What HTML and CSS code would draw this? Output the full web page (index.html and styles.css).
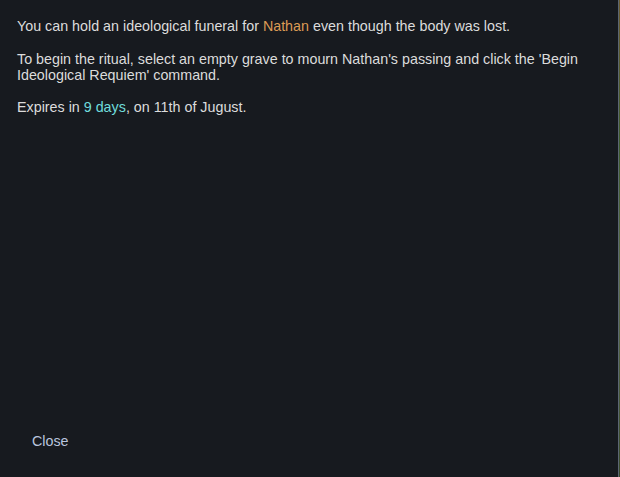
FILE: index.html
```html
<!DOCTYPE html>
<html lang="en">

<head>
    <meta charset="UTF-8">
    <title>Ideological funeral</title>
    <link rel="stylesheet" href="styles.css">
</head>

<body>
    <div class="window">
        <div class="letter">
            <p>You can hold an ideological funeral for <span class="pawn">Nathan</span> even though the body was lost.</p>
            <p>To begin the ritual, select an empty grave to mourn Nathan's passing and click the 'Begin
                Ideological Requiem' command.</p>
            <p>Expires in <span class="time">9 days</span>, on 11th of Jugust.</p>
        </div>
        <div class="actions">
            <a class="option" href="#">Close</a>
        </div>
    </div>
    <div class="world"></div>
</body>

</html>
```

FILE: styles.css
```css
*,
*::after,
*::before {
    box-sizing: border-box;
}

html,
body {
    height: 100%;
}

body {
    margin: 0;
    display: flex;
    background: #4a5a3a;
    font-family: "Liberation Sans", Arial, sans-serif;
    font-size: 14.3px;
    line-height: 16px;
    color: #dcdcdc;
}

.window {
    width: 619px;
    flex: none;
    display: flex;
    flex-direction: column;
    background-color: #171a1f;
    border-right: 1px solid #5b6673;
}

.letter {
    flex: 1;
    padding: 18px 17px 0;
}

.letter p {
    margin: 0 0 16.5px;
}

.pawn {
    color: #dc9b55;
}

.time {
    color: #70dcdc;
}

.actions {
    padding: 0 0 28px 32px;
}

.option {
    color: #b9c5de;
    text-decoration: none;
}

.world {
    flex: 1;
    background: linear-gradient(#6b5a2e, #3d5a2c 30%, #5b6a4a 60%, #3a4a2c);
}
```
